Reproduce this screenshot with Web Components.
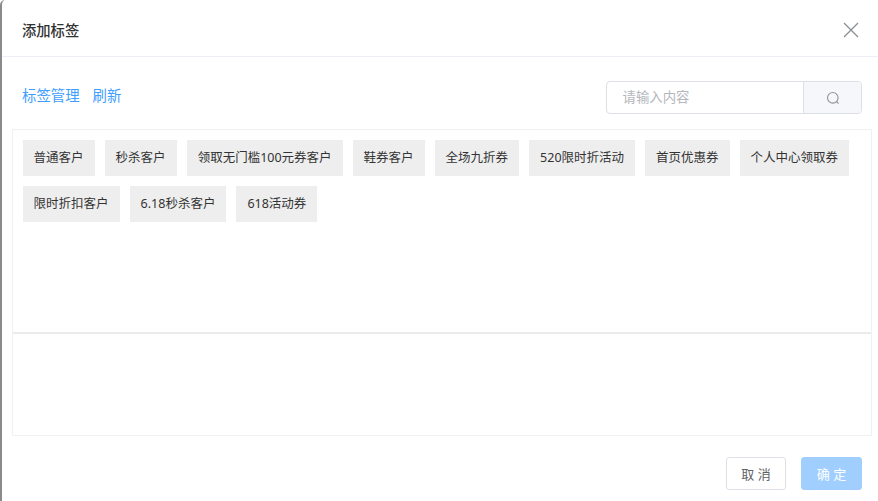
<!DOCTYPE html>
<html lang="zh">
<head>
<meta charset="utf-8">
<title>添加标签</title>
<style>
    html, body {
        margin: 0;
        height: 100%;
        background: #fff;
    }
    body {
        font-family: "Noto Sans", "Noto Sans CJK SC", sans-serif;
        overflow: hidden;
    }
</style>
</head>
<body>
<tag-dialog heading="添加标签">
    <tag-toolbar slot="toolbar"></tag-toolbar>
    <tag-chip>普通客户</tag-chip>
    <tag-chip>秒杀客户</tag-chip>
    <tag-chip>领取无门槛100元券客户</tag-chip>
    <tag-chip>鞋券客户</tag-chip>
    <tag-chip>全场九折券</tag-chip>
    <tag-chip>520限时折活动</tag-chip>
    <tag-chip>首页优惠券</tag-chip>
    <tag-chip>个人中心领取券</tag-chip>
    <tag-chip>限时折扣客户</tag-chip>
    <tag-chip>6.18秒杀客户</tag-chip>
    <tag-chip>618活动券</tag-chip>
    <dialog-button slot="footer">取 消</dialog-button>
    <dialog-button slot="footer" primary>确 定</dialog-button>
</tag-dialog>

<script>
class TagDialog extends HTMLElement {
    constructor() {
        super();
        this.attachShadow({ mode: 'open' });
        this.shadowRoot.innerHTML = `
            <style>
                :host {
                    display: flex;
                    flex-direction: column;
                    height: 501px;
                    box-sizing: border-box;
                    border-left: 2px solid #8a8a8a;
                    border-top-left-radius: 5px;
                    color: #303133;
                }
                header {
                    height: 57px;
                    box-sizing: border-box;
                    border-bottom: 1px solid #ebeef5;
                    display: flex;
                    align-items: center;
                    justify-content: space-between;
                    padding: 2px 18px 0 20px;
                    font-size: 14.3px;
                    font-weight: 500;
                }
                svg { display: block; margin-top: 2px; }
                .toolbar {
                    height: 72px;
                    box-sizing: border-box;
                    padding: 24px 16px 0 20px;
                }
                .panel {
                    margin: 0 6px 0 10px;
                    border: 1px solid #eef0f4;
                }
                .tags {
                    height: 204px;
                    box-sizing: border-box;
                    border-bottom: 2px solid #ebebeb;
                    padding: 10px 10px 10px 9.6px;
                    display: flex;
                    flex-wrap: wrap;
                    align-content: flex-start;
                    gap: 10px;
                }
                .selected {
                    height: 101px;
                }
                footer {
                    flex: 1;
                    display: flex;
                    justify-content: flex-end;
                    align-items: flex-start;
                    gap: 15px;
                    padding: 21px 16px 0 0;
                }
            </style>
            <header>
                <span class="title"></span>
                <svg width="18" height="18" viewBox="0 0 18 18" fill="none" stroke="#8a8d93" stroke-width="1.3">
                    <path d="M2 2 L16 16 M16 2 L2 16"/>
                </svg>
            </header>
            <div class="toolbar"><slot name="toolbar"></slot></div>
            <div class="panel">
                <div class="tags"><slot></slot></div>
                <div class="selected"></div>
            </div>
            <footer><slot name="footer"></slot></footer>
        `;
        this.shadowRoot.querySelector('.title').textContent = this.getAttribute('heading');
    }
}

class TagToolbar extends HTMLElement {
    constructor() {
        super();
        this.attachShadow({ mode: 'open' });
        this.shadowRoot.innerHTML = `
            <style>
                :host {
                    display: flex;
                    justify-content: space-between;
                    align-items: flex-start;
                }
                .links {
                    display: flex;
                    gap: 13px;
                    color: #409eff;
                    font-size: 14.4px;
                    line-height: 30px;
                }
            </style>
            <div class="links"><span>标签管理</span><span>刷新</span></div>
            <search-box placeholder="请输入内容"></search-box>
        `;
    }
}

class SearchBox extends HTMLElement {
    constructor() {
        super();
        this.attachShadow({ mode: 'open' });
        this.shadowRoot.innerHTML = `
            <style>
                :host {
                    display: flex;
                    width: 256px;
                    height: 33px;
                    box-sizing: border-box;
                    border: 1px solid #dcdfe6;
                    border-radius: 4px;
                    font-size: 13.4px;
                    overflow: hidden;
                }
                .field {
                    flex: 1;
                    padding-left: 15.5px;
                    line-height: 31px;
                    color: #b4b7bd;
                }
                .btn {
                    width: 57px;
                    background: #f5f7fa;
                    border-left: 1px solid #dcdfe6;
                    display: flex;
                    align-items: center;
                    justify-content: center;
                }
                svg { display: block; margin-left: 1px; }
            </style>
            <div class="field"></div>
            <div class="btn">
                <svg width="14" height="14" viewBox="0 0 14 14" fill="none" stroke="#909399" stroke-width="1.1">
                    <circle cx="6.8" cy="6.8" r="5.3"/>
                    <path d="M10.5 10.5 L12.6 12.6"/>
                </svg>
            </div>
        `;
        this.shadowRoot.querySelector('.field').textContent = this.getAttribute('placeholder');
    }
}

class TagChip extends HTMLElement {
    constructor() {
        super();
        this.attachShadow({ mode: 'open' });
        this.shadowRoot.innerHTML = `
            <style>
                :host {
                    display: block;
                    height: 36px;
                    padding: 0 11px;
                    background: #eeeeee;
                    color: #333333;
                    font-size: 12.5px;
                    line-height: 35px;
                    white-space: nowrap;
                }
            </style>
            <slot></slot>
        `;
    }
}

class DialogButton extends HTMLElement {
    constructor() {
        super();
        this.attachShadow({ mode: 'open' });
        this.shadowRoot.innerHTML = `
            <style>
                :host {
                    display: flex;
                    align-items: center;
                    justify-content: center;
                    width: 60px;
                    height: 33px;
                    box-sizing: border-box;
                    border: 1px solid #dcdfe6;
                    border-radius: 3px;
                    background: #fff;
                    color: #606266;
                    font-size: 13px;
                }
                :host([primary]) {
                    width: 61px;
                    border-color: #a0cfff;
                    background: #a0cfff;
                    color: #fff;
                }
            </style>
            <slot></slot>
        `;
    }
}

customElements.define('tag-chip', TagChip);
customElements.define('dialog-button', DialogButton);
customElements.define('search-box', SearchBox);
customElements.define('tag-toolbar', TagToolbar);
customElements.define('tag-dialog', TagDialog);
</script>
</body>
</html>
